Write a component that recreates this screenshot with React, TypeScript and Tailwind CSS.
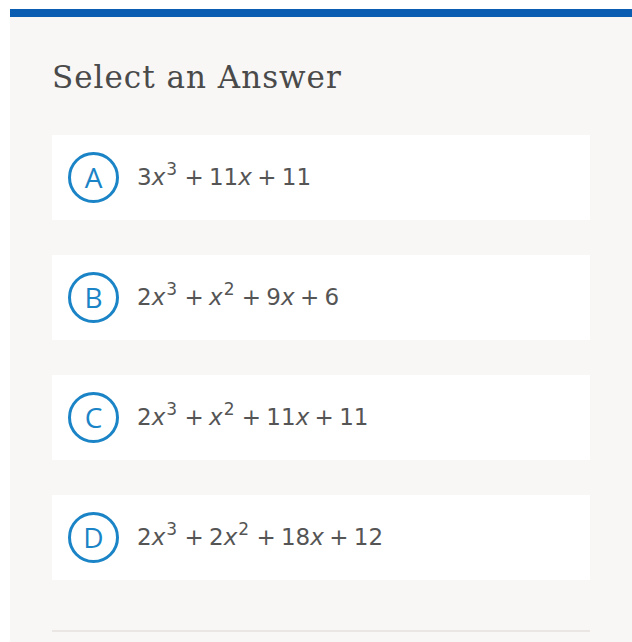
import React from 'react';

const answers: { letter: string; terms: React.ReactNode }[] = [
  {
    letter: 'A',
    terms: (
      <>
        3<i>x</i><sup>3</sup> + 11<i>x</i> + 11
      </>
    ),
  },
  {
    letter: 'B',
    terms: (
      <>
        2<i>x</i><sup>3</sup> + <i>x</i><sup>2</sup> + 9<i>x</i> + 6
      </>
    ),
  },
  {
    letter: 'C',
    terms: (
      <>
        2<i>x</i><sup>3</sup> + <i>x</i><sup>2</sup> + 11<i>x</i> + 11
      </>
    ),
  },
  {
    letter: 'D',
    terms: (
      <>
        2<i>x</i><sup>3</sup> + 2<i>x</i><sup>2</sup> + 18<i>x</i> + 12
      </>
    ),
  },
];

function AnswerCard({ letter, children }: { letter: string; children: React.ReactNode }) {
  return (
    <button className="flex h-[85px] w-full items-center bg-white pl-4 text-left">
      {/* Letter bubble */}
      <span className="flex h-[51px] w-[51px] shrink-0 items-center justify-center rounded-full border-[3px] border-[#1a84c6] pb-[2px] font-['Open_Sans',sans-serif] text-[28px] font-medium leading-none text-[#1a84c6]">
        {letter}
      </span>
      <span className="ml-[18px] font-['DejaVu_Sans',sans-serif] text-[23px] leading-none text-[#555] [word-spacing:-2px] [&_i]:italic [&_sup]:top-[-10px] [&_sup]:ml-[1px] [&_sup]:mr-[2px] [&_sup]:text-[17px]">
        {children}
      </span>
    </button>
  );
}

export default function App() {
  return (
    <div className="min-h-[642px] bg-white pl-[10px] pt-[9px]">
      <div className="h-2 bg-[#0b5db2]" />
      <div className="min-h-[625px] bg-[#f8f7f6] px-[42px] pt-[40px]">
        <h2 className="font-['DejaVu_Serif',serif] text-[31px] leading-[40px] tracking-[1px] text-[#4a4a4a]">
          Select an Answer
        </h2>

        <div className="mt-[38px] flex flex-col gap-[35px]">
          {answers.map((a) => (
            <AnswerCard key={a.letter} letter={a.letter}>
              {a.terms}
            </AnswerCard>
          ))}
        </div>

        <div className="mt-[50px] h-[2px] bg-[#e9e6e4]" />
      </div>
    </div>
  );
}
